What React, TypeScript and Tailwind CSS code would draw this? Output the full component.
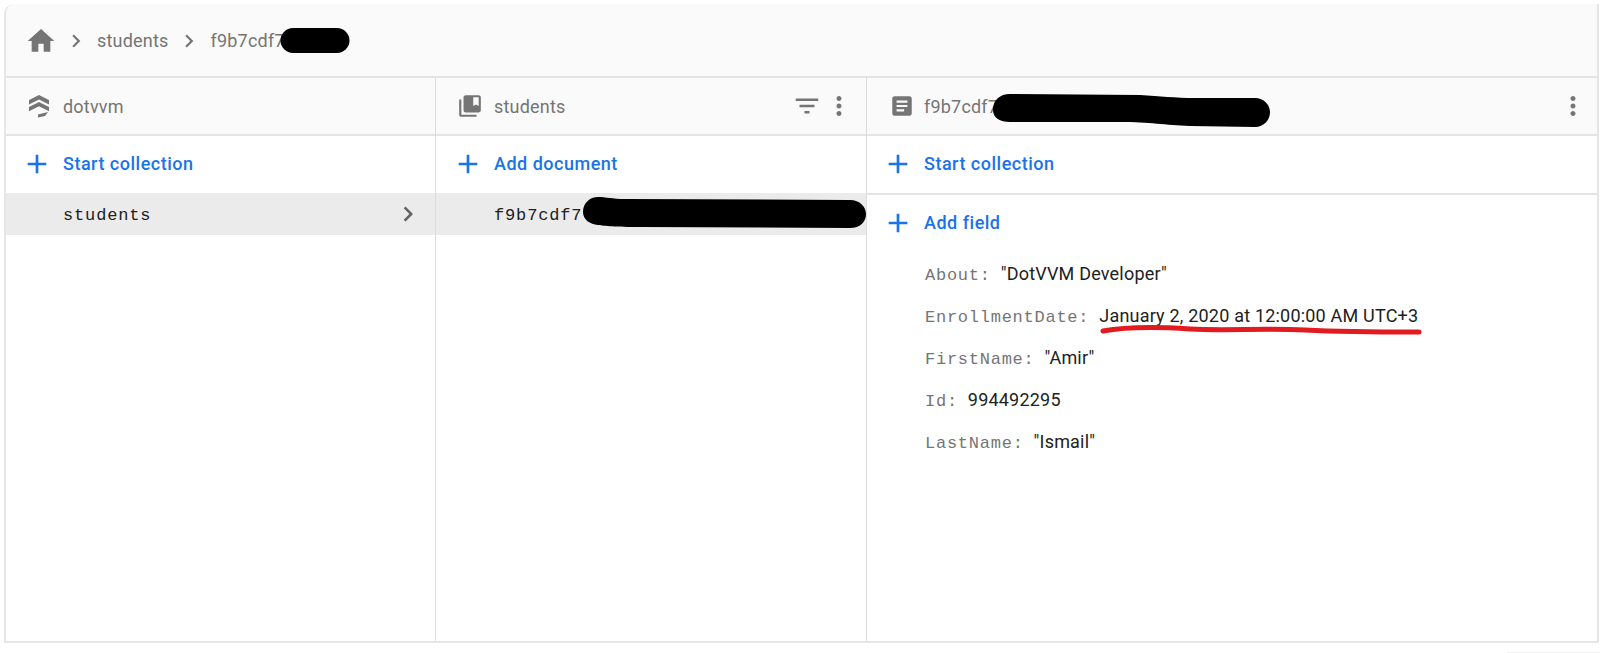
const ICON_PATHS = {
  home: 'M10 20v-6h4v6h5v-8h3L12 3 2 12h3v8z',
  chevron: 'M10 6L8.59 7.41 13.17 12l-4.58 4.59L10 18l6-6z',
  add: 'M19 13h-6v6h-2v-6H5v-2h6V5h2v6h6v2z',
  collections:
    'M4 6H2v14c0 1.1.9 2 2 2h14v-2H4V6zM20 2H8c-1.1 0-2 .9-2 2v12c0 1.1.9 2 2 2h12c1.1 0 2-.9 2-2V4c0-1.1-.9-2-2-2zm0 10l-2.5-1.5L15 12V4h5v8z',
  document:
    'M19 3H5c-1.1 0-2 .9-2 2v14c0 1.1.9 2 2 2h14c1.1 0 2-.9 2-2V5c0-1.1-.9-2-2-2zm-5 14H7v-2h7v2zm3-4H7v-2h10v2zm0-4H7V7h10v2z',
  filter: 'M10 18h4v-2h-4v2zM3 6v2h18V6H3zm3 7h12v-2H6v2z',
  more: 'M12 8c1.1 0 2-.9 2-2s-.9-2-2-2-2 .9-2 2 .9 2 2 2zm0 2c-1.1 0-2 .9-2 2s.9 2 2 2 2-.9 2-2-.9-2-2-2zm0 6c-1.1 0-2 .9-2 2s.9 2 2 2 2-.9 2-2-.9-2-2-2z',
}

function Icon({ name, className }: { name: keyof typeof ICON_PATHS; className: string }) {
  return (
    <svg viewBox="0 0 24 24" fill="currentColor" className={className}>
      <path d={ICON_PATHS[name]} />
    </svg>
  )
}

function DatabaseIcon() {
  return (
    <svg viewBox="0 0 24 24" fill="#757575" className="w-[24px] h-[24px] shrink-0">
      <path d="M12 1 22 6V10.500L12 5.500 2 10.500V6z" />
      <path d="M12 8 22 13V17.200L12 12.300 2 17.200V13z" />
      <path d="M11 20.500 21 18 18 22 11 23.500z" />
    </svg>
  )
}

function ActionRow({ label, className = '' }: { label: string; className?: string }) {
  return (
    <div className={`flex items-center pb-[2px] text-[#1a73e8] ${className}`}>
      <Icon name="add" className="w-[32px] h-[32px] shrink-0" />
      <span className="ml-[10px] text-[18px] font-medium tracking-[0.5px]">{label}</span>
    </div>
  )
}

function ColumnHeader({ children }: { children: React.ReactNode }) {
  return (
    <div className="h-[58px] shrink-0 flex items-center bg-[#fafafa] border-b-2 border-[#e4e4e4] text-[#757575]">
      {children}
    </div>
  )
}

const fields = [
  { key: 'About', value: '"DotVVM Developer"' },
  { key: 'EnrollmentDate', value: 'January 2, 2020 at 12:00:00 AM UTC+3' },
  { key: 'FirstName', value: '"Amir"' },
  { key: 'Id', value: '994492295' },
  { key: 'LastName', value: '"Ismail"' },
]

export default function App() {
  return (
    <div className="relative h-[653px] overflow-hidden bg-white [font-family:Roboto,sans-serif]">
      <div className="ml-[4px] mt-[4px] mr-px h-[639px] flex flex-col border-2 border-t-0 border-[#e6e6e6] rounded-tl-[10px] overflow-hidden">
        {/* breadcrumb */}
        <div className="h-[74px] shrink-0 flex items-center pl-[19px] pt-[1px] bg-[#fafafa] border-b-2 border-[#e4e4e4] text-[#757575]">
          <Icon name="home" className="w-[32px] h-[32px]" />
          <Icon name="chevron" className="w-[26px] h-[26px] ml-[6px]" />
          <span className="ml-[8px] text-[18px] tracking-[0.2px]">students</span>
          <Icon name="chevron" className="w-[26px] h-[26px] ml-[7px]" />
          <span className="ml-[9px] text-[18px] tracking-[0.2px]">f9b7cdf7</span>
        </div>

        <div className="flex-1 flex min-h-0">
          {/* root column */}
          <div className="w-[430px] shrink-0 flex flex-col border-r border-[#dcdcdc]">
            <ColumnHeader>
              <div className="pl-[21px] flex items-center">
                <DatabaseIcon />
                <span className="ml-[12px] text-[18px] tracking-[0.2px]">dotvvm</span>
              </div>
            </ColumnHeader>
            <ActionRow label="Start collection" className="h-[57px] shrink-0 pl-[15px]" />
            <div className="h-[42px] shrink-0 flex items-center justify-between pl-[57px] pr-[12px] bg-[#ebebeb] text-[#212121]">
              <span className="mt-[3px] text-[17px] tracking-[0.85px] [font-family:'Liberation_Mono',monospace]">students</span>
              <Icon name="chevron" className="w-[30px] h-[30px] text-[#616161]" />
            </div>
          </div>

          {/* collection column */}
          <div className="w-[431px] shrink-0 flex flex-col border-r border-[#dcdcdc]">
            <ColumnHeader>
              <div className="flex-1 pl-[21px] pr-[12px] flex items-center justify-between">
                <div className="flex items-center">
                  <Icon name="collections" className="w-[26px] h-[26px]" />
                  <span className="ml-[11px] text-[18px] tracking-[0.2px]">students</span>
                </div>
                <div className="flex items-center">
                  <Icon name="filter" className="w-[30px] h-[30px]" />
                  <Icon name="more" className="w-[30px] h-[30px] ml-[2px]" />
                </div>
              </div>
            </ColumnHeader>
            <ActionRow label="Add document" className="h-[57px] shrink-0 pl-[16px]" />
            <div className="h-[42px] shrink-0 flex items-center pl-[58px] bg-[#ebebeb] text-[#212121]">
              <span className="mt-[3px] text-[17px] tracking-[0.85px] [font-family:'Liberation_Mono',monospace]">f9b7cdf7</span>
            </div>
          </div>

          {/* document column */}
          <div className="flex-1 min-w-0 flex flex-col">
            <ColumnHeader>
              <div className="flex-1 pl-[22px] pr-[9px] flex items-center justify-between">
                <div className="flex items-center">
                  <Icon name="document" className="w-[26px] h-[26px]" />
                  <span className="ml-[9px] text-[18px] tracking-[0.2px]">f9b7cdf7</span>
                </div>
                <Icon name="more" className="w-[30px] h-[30px]" />
              </div>
            </ColumnHeader>
            <ActionRow label="Start collection" className="h-[59px] shrink-0 pl-[15px] border-b-2 border-[#e4e4e4]" />
            <ActionRow label="Add field" className="h-[57px] shrink-0 pl-[15px]" />
            <div className="pl-[58px] pt-[8px] flex flex-col">
              {fields.map(field => (
                <div key={field.key} className="h-[42px] flex items-baseline">
                  <span className="text-[17px] tracking-[0.75px] text-[#757575] [font-family:'Liberation_Mono',monospace]">
                    {field.key}:
                  </span>
                  <span className="ml-[10px] text-[18px] tracking-[0.2px] text-[#212121]">{field.value}</span>
                </div>
              ))}
            </div>
          </div>
        </div>
      </div>

      {/* faint edge left in the bottom right corner of the screenshot */}
      <div className="absolute bottom-0 right-0 h-px w-[93px] bg-[#efefef]" />

      {/* marker strokes drawn over the screenshot */}
      <svg className="absolute inset-0 w-[1600px] h-[653px] pointer-events-none" viewBox="0 0 1600 653">
        <path d="M293 40.500H337" stroke="#000" strokeWidth="25" strokeLinecap="round" fill="none" />
        <path
          d="M583 212C583 203 590 197 598 197C606 197 612 199 625 199L850 200C860 200 866 207 866 214C866 222 860 228 850 228L640 227C615 227 605 226 598 225C590 224 583 220 583 212Z"
          fill="#000"
        />
        <path
          d="M993 110C993 100 1000 94 1010 94L1140 95C1160 96 1175 98 1195 98L1255 98C1264 98 1270 105 1270 112C1270 120 1264 127 1255 127L1190 126C1165 125 1150 122 1120 122L1010 122C1000 122 993 118 993 110Z"
          fill="#000"
        />
        <path
          d="M1103 331C1125 327 1160 327 1190 329C1225 331 1265 328 1305 330C1345 332 1385 332 1419 332"
          stroke="#e11b1f"
          strokeWidth="5"
          strokeLinecap="round"
          fill="none"
        />
      </svg>
    </div>
  )
}
